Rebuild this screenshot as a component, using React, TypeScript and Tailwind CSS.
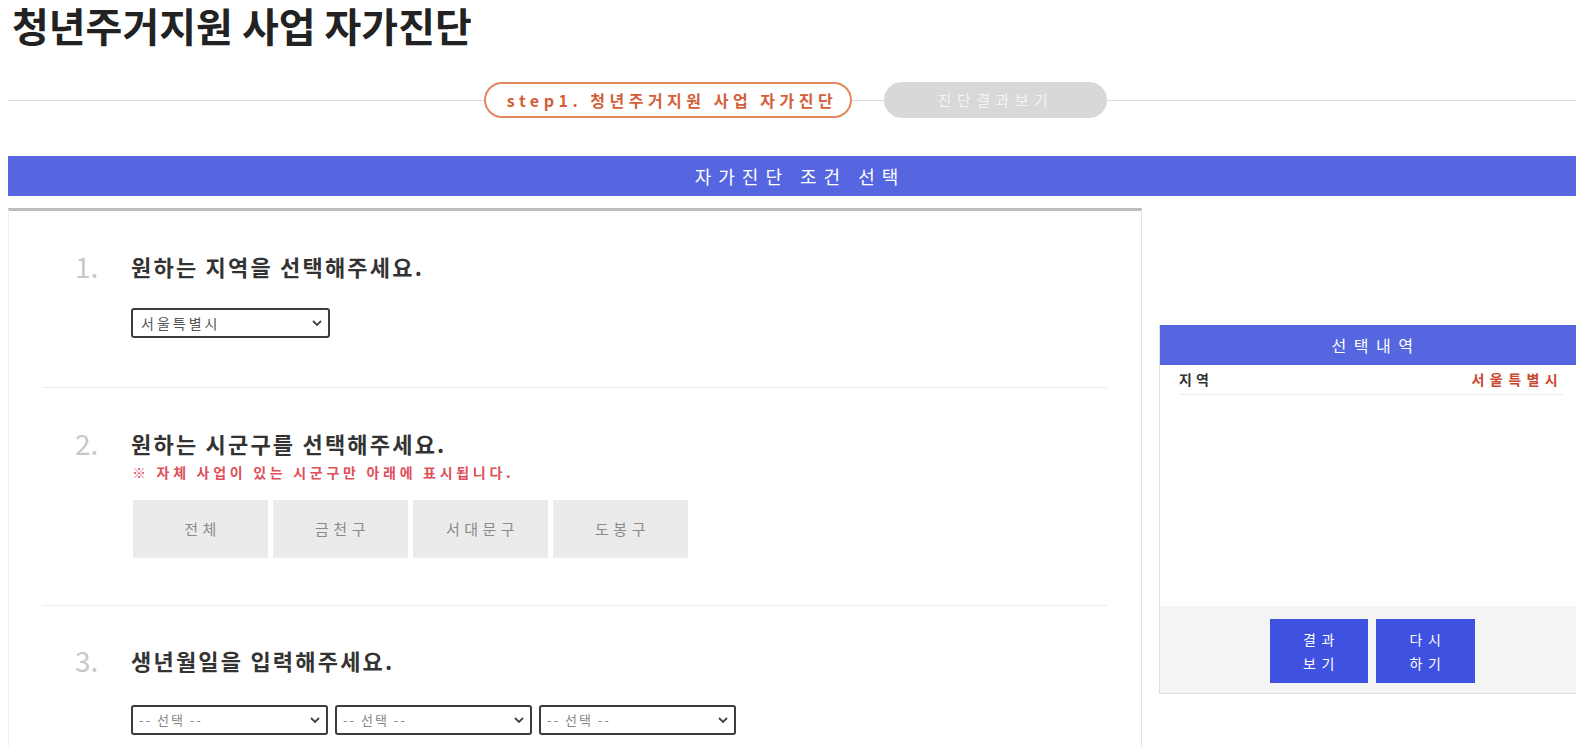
import React from "react";

function Chevron() {
  return (
    <svg width="10" height="8" viewBox="0 0 10 8" fill="none">
      <polyline points="1,2 5,6 9,2" stroke="#444" strokeWidth="1.8" fill="none" />
    </svg>
  );
}

function Heading({ num, text }: { num: string; text: string }) {
  return (
    <div className="flex items-center h-[30px]">
      <span className="w-[89px] pl-[33px] text-[28px] leading-[30px] text-[#c8c8c8]">{num}</span>
      <span className="text-[22px] leading-[30px] font-bold tracking-[2.2px] text-[#333]">{text}</span>
    </div>
  );
}

export default function App() {
  return (
    <div className="w-[1576px] h-[746px] overflow-hidden bg-white font-['Noto_Sans_CJK_KR',sans-serif] text-[#333]">
      <div className="h-[82px] pl-[12px] pt-[1px]">
        <h1 className="text-[40px] leading-[48px] font-bold text-[#222]">청년주거지원 사업 자가진단</h1>
      </div>

      <div className="flex items-center h-[36px] pl-[8px]">
        <div className="w-[476px] h-px bg-[#dcdcdc]" />
        <div className="w-[368px] h-[36px] rounded-full border-2 border-[#e2885e] bg-white flex items-center justify-center pl-[8px] text-[16px] font-bold text-[#d4603a] tracking-[4.5px]">
          step1. 청년주거지원 사업 자가진단
        </div>
        <div className="w-[32px] h-px bg-[#dcdcdc]" />
        <div className="w-[223px] h-[36px] rounded-full bg-[#d8d8d8] flex items-center justify-center text-[15px] text-[#f4f4f4] tracking-[5.5px]">
          진단결과보기
        </div>
        <div className="flex-1 h-px bg-[#dcdcdc]" />
      </div>

      <div className="mt-[38px] ml-[8px] h-[40px] bg-[#5566e0] flex items-center justify-center pl-[16px] text-white text-[18px] tracking-[7px]">
        자가진단 조건 선택
      </div>

      <div className="mt-[12px] ml-[8px] flex h-[538px]">
        <div className="w-[1134px] shrink-0 border-t-[3px] border-t-[#bdbdbd] border-r border-r-[#e3e3e3] border-l border-l-[#efefef] pl-[33px] pr-[34px]">
          <div className="border-b border-[#ececec] pt-[40px] pb-[49px]">
            <Heading num="1." text="원하는 지역을 선택해주세요." />
            <div className="ml-[89px] mt-[27px] w-[199px] h-[30px] border-2 border-[#3c3c3c] rounded-[3px] flex items-center justify-between pl-[8px] pr-[6px] text-[14px] tracking-[3px] text-[#555]">
              <span>서울특별시</span>
              <Chevron />
            </div>
          </div>

          <div className="border-b border-[#ececec] pt-[40px] pb-[47px]">
            <Heading num="2." text="원하는 시군구를 선택해주세요." />
            <div className="ml-[90px] mt-[5px] h-[18px] leading-[18px] text-[14px] font-semibold text-[#de4f5a] tracking-[3.7px]">
              ※ 자체 사업이 있는 시군구만 아래에 표시됩니다.
            </div>
            <div className="ml-[91px] mt-[19px] flex gap-[5px]">
              {["전체", "금천구", "서대문구", "도봉구"].map((t) => (
                <div key={t} className="w-[135px] h-[58px] bg-[#ebebeb] flex items-center justify-center pl-[4px] text-[15px] text-[#8a8a8a] tracking-[4.5px]">
                  {t}
                </div>
              ))}
            </div>
          </div>

          <div className="pt-[39px]">
            <Heading num="3." text="생년월일을 입력해주세요." />
            <div className="ml-[89px] mt-[30px] flex gap-[7px]">
              {[0, 1, 2].map((i) => (
                <div key={i} className="w-[197px] h-[30px] border-2 border-[#3c3c3c] rounded-[3px] flex items-center justify-between pl-[6px] pr-[6px] text-[13px] tracking-[2px] text-[#888]">
                  <span>-- 선택 --</span>
                  <Chevron />
                </div>
              ))}
            </div>
          </div>
        </div>

        <div className="w-[443px] shrink-0 pl-[17px] pt-[117px]">
          <div className="w-[426px] h-[369px] border-l border-b border-[#dddddd] flex flex-col">
            <div className="h-[40px] bg-[#5566e0] text-white text-[16px] tracking-[7.5px] flex items-center justify-center pl-[7px]">
              선택내역
            </div>
            <div className="ml-[19px] mr-[22px] h-[30px] border-b border-[#ececec] flex items-center justify-between">
              <span className="text-[14px] font-bold text-[#333] tracking-[4px]">지역</span>
              <span className="text-[14px] font-semibold text-[#c8472f] tracking-[5.4px]">서울특별시</span>
            </div>
            <div className="flex-1" />
            <div className="h-[87px] bg-[#f4f4f4] flex justify-center items-start pt-[13px] gap-[8px]">
              <div className="w-[98px] h-[64px] bg-[#3f51e1] text-white text-[14px] leading-[24px] tracking-[5.5px] pl-[5px] flex items-center justify-center text-center">
                결과<br />보기
              </div>
              <div className="w-[99px] h-[64px] bg-[#3f51e1] text-white text-[14px] leading-[24px] tracking-[5.5px] pl-[5px] flex items-center justify-center text-center">
                다시<br />하기
              </div>
            </div>
          </div>
        </div>
      </div>
    </div>
  );
}
